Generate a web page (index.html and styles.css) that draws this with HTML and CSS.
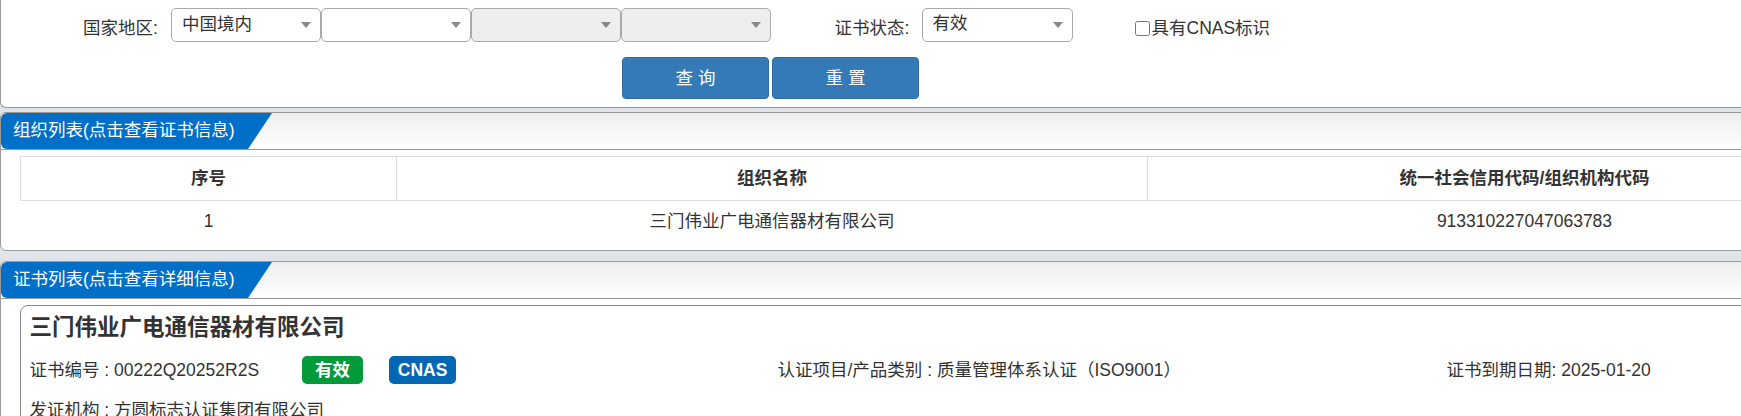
FILE: index.html
```html
<!DOCTYPE html>
<html lang="zh-CN">
<head>
<meta charset="utf-8">
<title>证书查询</title>
<link rel="stylesheet" href="styles.css">
</head>
<body>
<section class="panel panel-search">
  <div class="form-row">
    <span class="field-label area-label">国家地区:</span>
    <div class="selects">
      <div class="select-wrap"><select class="select"><option>中国境内</option></select></div>
      <div class="select-wrap"><select class="select"><option></option></select></div>
      <div class="select-wrap"><select class="select" disabled><option></option></select></div>
      <div class="select-wrap"><select class="select" disabled><option></option></select></div>
    </div>
    <span class="field-label status-label">证书状态:</span>
    <div class="select-wrap status-select"><select class="select"><option>有效</option></select></div>
    <label class="check-label"><input type="checkbox" class="check">具有CNAS标识</label>
  </div>
  <div class="button-row">
    <button class="btn" type="button">查 询</button>
    <button class="btn" type="button">重 置</button>
  </div>
</section>

<section class="panel panel-org">
  <header class="panel-head"><h2 class="tab">组织列表(点击查看证书信息)</h2></header>
  <div class="org-body">
    <table class="org-table">
      <colgroup><col class="col-no"><col class="col-name"><col class="col-code"></colgroup>
      <thead>
        <tr><th>序号</th><th>组织名称</th><th>统一社会信用代码/组织机构代码</th></tr>
      </thead>
      <tbody>
        <tr><td>1</td><td>三门伟业广电通信器材有限公司</td><td>913310227047063783</td></tr>
      </tbody>
    </table>
  </div>
</section>

<section class="panel panel-cert">
  <header class="panel-head"><h2 class="tab">证书列表(点击查看详细信息)</h2></header>
  <div class="cert-body">
    <article class="card">
      <h3 class="card-title">三门伟业广电通信器材有限公司</h3>
      <div class="card-row">
        <div class="cert-no">证书编号 : 00222Q20252R2S<span class="badge badge-valid">有效</span><span class="badge badge-cnas">CNAS</span></div>
        <div>认证项目/产品类别 : 质量管理体系认证（ISO9001）</div>
        <div>证书到期日期: 2025-01-20</div>
      </div>
      <div class="card-row">
        <div>发证机构 : 方圆标志认证集团有限公司</div>
      </div>
    </article>
  </div>
</section>
</body>
</html>
```

FILE: styles.css
```css
* { box-sizing: border-box; }
html { overflow: hidden; height: 100%; }
body {
  margin: 0;
  width: 1960px;
  background: #e0e4e8;
  color: #333;
  font-family: "Liberation Sans", "Noto Sans CJK SC", sans-serif;
  font-size: 17.5px;
  line-height: 24px;
}

.panel {
  background: #fff;
  border: 1px solid #999;
  border-radius: 6px;
  overflow: hidden;
}
.panel-search {
  height: 108px;
  border-top: 0;
  border-radius: 0 0 6px 6px;
  padding-top: 8px;
  margin-bottom: 4px;
}
.panel-org { height: 139px; margin-bottom: 10px; }
.panel-cert { height: 200px; border-bottom: 0; border-radius: 6px 6px 0 0; }

.form-row { display: flex; align-items: flex-start; height: 34px; }
.field-label { width: 74px; margin-top: 8px; white-space: nowrap; line-height: 24px; }
.area-label { margin-left: 82px; margin-right: 14px; }
.status-label { margin-left: 63.5px; margin-right: 13px; }
.selects { display: flex; }

.select-wrap { position: relative; width: 150px; height: 34px; }
.select-wrap::after {
  content: "";
  position: absolute;
  right: 10px;
  top: 14px;
  border-left: 5px solid transparent;
  border-right: 5px solid transparent;
  border-top: 6px solid #888;
  pointer-events: none;
}
.select {
  appearance: none;
  -webkit-appearance: none;
  display: block;
  width: 100%;
  height: 100%;
  padding: 0 24px 3px 10px;
  border: 1px solid #aaa;
  border-radius: 5px;
  background: #fff;
  color: #333;
  font: inherit;
  opacity: 1;
}
.select:disabled { background: #eee; }
.status-select { width: 151px; }
.status-select .select { padding-left: 10px; padding-bottom: 5px; }

.check-label { display: flex; align-items: center; margin: 8px 0 0 61px; line-height: 24px; white-space: nowrap; }
.check { width: 15px; height: 15px; margin: 0 2px 0 1px; }

.button-row { display: flex; gap: 3px; margin: 15px 0 0 621px; }
.btn {
  width: 147px;
  height: 42px;
  padding: 0;
  border: 1px solid #2e6da4;
  border-radius: 4px;
  background: #337ab7;
  color: #fff;
  font: inherit;
}

.panel-head {
  height: 37px;
  border-bottom: 1px solid #999;
  background: linear-gradient(#eee, #fff);
}
.tab {
  width: 271px;
  height: 36px;
  margin: 0;
  padding: 0 0 0 12px;
  background: #006fc8;
  border-radius: 6px 0 0 6px;
  clip-path: polygon(0 0, 100% 0, 247px 100%, 0 100%);
  color: #fff;
  font-size: 17.5px;
  font-weight: normal;
  line-height: 34px;
  white-space: nowrap;
}

.org-body { padding: 6px 0 0 19px; }
.org-table { width: 1882px; border-collapse: collapse; table-layout: fixed; }
.col-no { width: 376px; }
.col-name { width: 751px; }
.org-table th {
  height: 44px;
  padding: 0 0 2px;
  border: 1px solid #ddd;
  text-align: center;
  font-weight: bold;
}
.org-table td {
  height: 41px;
  padding: 0;
  text-align: center;
}

.cert-body { padding: 6px 0 0 19px; }
.card {
  height: 200px;
  padding: 0 8.5px;
  border: 1px solid #888;
  border-radius: 8px 0 0 0;
}
.card-title {
  margin: 0;
  height: 44px;
  font-size: 22.5px;
  font-weight: bold;
  line-height: 44px;
}
.card-row {
  display: grid;
  grid-template-columns: 748px 669px 1fr;
  align-items: center;
  height: 40px;
}
.cert-no { display: flex; align-items: center; white-space: nowrap; }
.badge {
  display: inline-block;
  height: 28px;
  border-radius: 5px;
  color: #fff;
  font-weight: bold;
  line-height: 28px;
  text-align: center;
}
.badge-valid { width: 61px; margin-left: 43px; background: #009a3a; }
.badge-cnas { width: 67px; margin-left: 26px; background: #0067b5; }
```
